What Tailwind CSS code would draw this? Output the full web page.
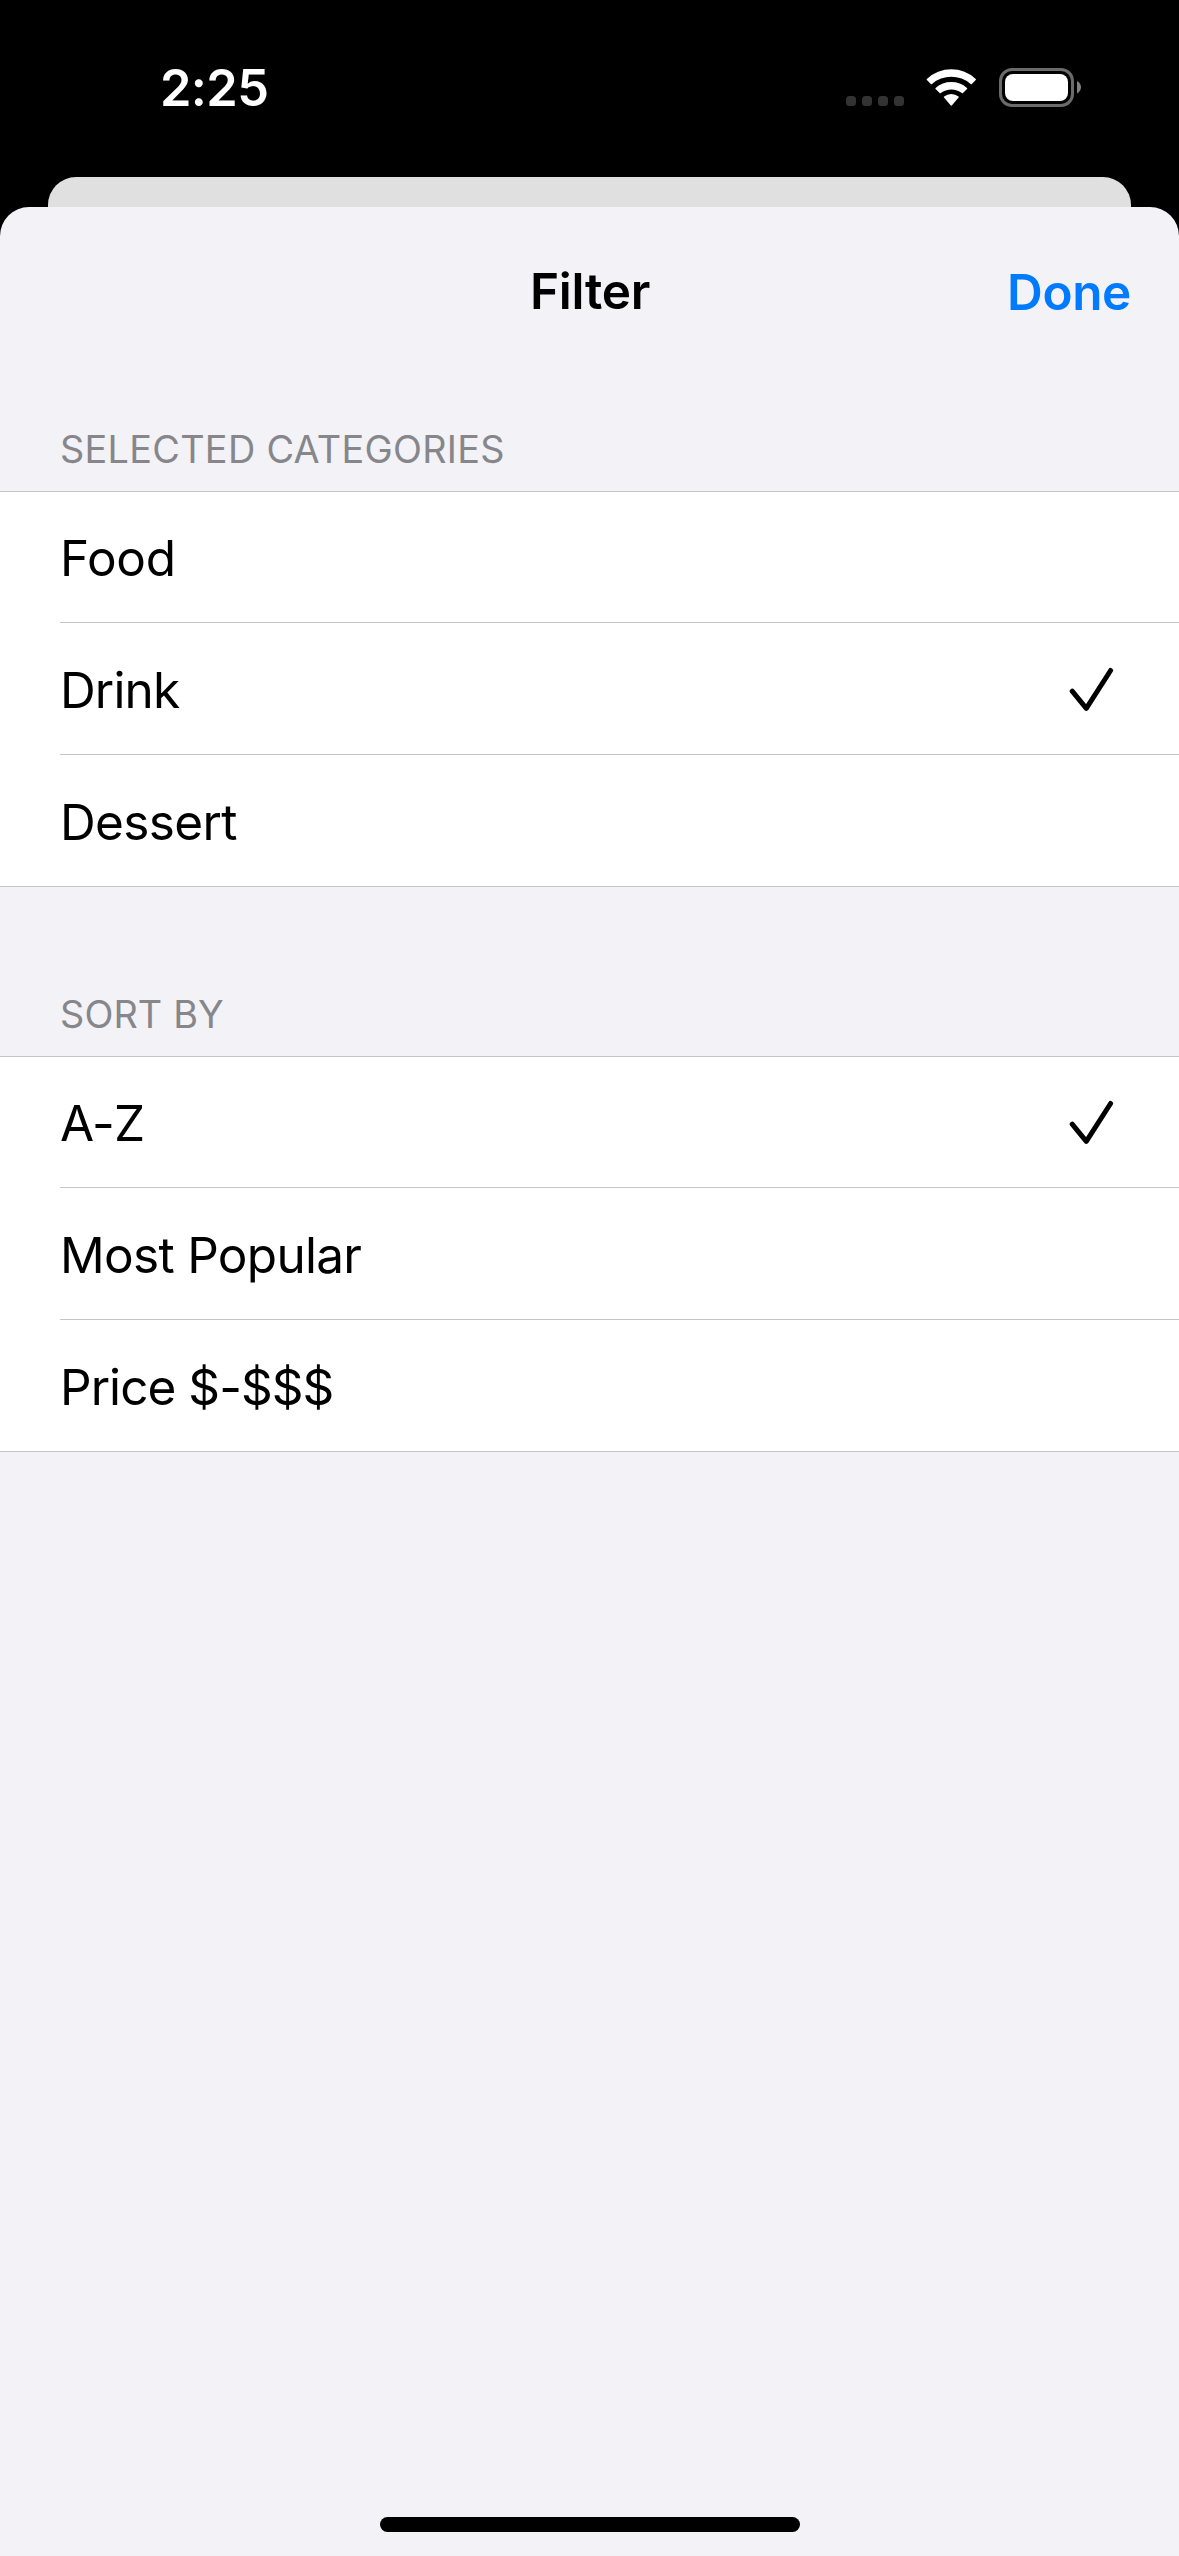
<!DOCTYPE html>
<html lang="en">
<head>
<meta charset="utf-8">
<title>Filter</title>
<script src="https://cdn.jsdelivr.net/npm/@tailwindcss/browser@4"></script>
</head>
<body class="bg-black">
<div class="flex h-[2556px] w-[1179px] flex-col overflow-hidden bg-black font-['Inter',sans-serif] text-black">
  <!-- Status bar -->
  <div class="flex h-[177px] shrink-0 items-start justify-between pl-[160px] pr-[98px] text-white">
    <div class="pt-[58px] text-[50.5px] leading-[60px] font-semibold tracking-[-0.6px]">2:25</div>
    <div class="flex pt-[68px]">
      <svg class="mr-[22px] h-[39px] w-[58px]" viewBox="0 0 58 39" fill="#333333">
        <rect x="0" y="28" width="10" height="10" rx="3.5"/>
        <rect x="16" y="28" width="10" height="10" rx="3.5"/>
        <rect x="32" y="28" width="10" height="10" rx="3.5"/>
        <rect x="48" y="28" width="10" height="10" rx="3.5"/>
      </svg>
      <svg class="mr-[21px] h-[39px] w-[52px]" viewBox="0 0 52 39" fill="white">
        <path d="M.9 12.1Q.3 11.5.9 10.9A36 36 0 0 1 49.7 10.9Q50.3 11.5 49.7 12.1L45.8 16Q45.3 16.5 44.6 15.9A29.5 29.5 0 0 0 6 15.9Q5.3 16.5 4.8 16Z"/>
        <path d="M9.6 21.1Q9 20.5 9.6 19.9A23.8 23.8 0 0 1 41 19.9Q41.6 20.5 41 21.1L37 25.1Q36.5 25.6 35.8 25.1A17 17 0 0 0 14.8 25.1Q14.1 25.6 13.6 25.1Z"/>
        <path d="M18 29.6Q17.4 29 18.1 28.5A11.5 11.5 0 0 1 32.5 28.5Q33.2 29 32.6 29.6L26 37.3Q25.3 38 24.6 37.3Z"/>
      </svg>
      <svg class="h-[39px] w-[82px]" viewBox="0 0 82 39">
        <rect x="1.5" y="1.5" width="72" height="36" rx="11.5" fill="none" stroke="#6b6b6b" stroke-width="3"/>
        <rect x="6" y="6" width="63" height="27" rx="8" fill="white"/>
        <path d="M78 13Q82 15.5 82 19.2T78 25.5Z" fill="#808080"/>
      </svg>
    </div>
  </div>
  <!-- Edge of the screen behind the sheet -->
  <div class="mx-[48px] -mb-[40px] h-[70px] shrink-0 rounded-t-[28px] bg-[#e0e0e0]"></div>
  <!-- Sheet -->
  <main class="flex flex-1 flex-col rounded-t-[29px] bg-[#f2f2f7]">
    <header class="grid h-[168px] shrink-0 grid-cols-3 pt-[54px] text-[49.5px] leading-[60px] font-semibold">
      <h1 class="col-start-2 pl-[1px] text-center tracking-[-0.26px]">Filter</h1>
      <button class="h-[61px] pt-[1px] pr-[48px] text-right tracking-[-0.39px] text-[#007aff]">Done</button>
    </header>
    <section>
      <h2 class="border-b border-[#c6c6c8] pt-[51px] pb-[19px] pl-[60px] text-[37.8px] leading-[46px] tracking-[0.3px] text-[#86868b]">SELECTED CATEGORIES</h2>
      <ul class="border-b border-[#c6c6c8] bg-white pl-[60px] text-[49.5px] leading-[128px]">
        <li class="border-b border-[#c6c6c8] pt-[2px] tracking-[-0.31px]">Food</li>
        <li class="flex items-start justify-between border-b border-[#c6c6c8] pt-[3px] pr-[65px] tracking-[-0.85px]">Drink
          <svg class="mt-[41px] h-[45px] w-[45px]" viewBox="0 0 45 45" fill="none" stroke="black" stroke-width="5" stroke-linecap="round" stroke-linejoin="round"><path d="M3.2 24.2L17.3 41.3L41.6 3.5"/></svg>
        </li>
        <li class="pt-[3px] tracking-[-0.65px]">Dessert</li>
      </ul>
    </section>
    <section>
      <h2 class="border-b border-[#c6c6c8] pt-[104px] pb-[19px] pl-[60px] text-[37.8px] leading-[46px] tracking-[0.13px] text-[#86868b]">SORT BY</h2>
      <ul class="border-b border-[#c6c6c8] bg-white pl-[60px] text-[49.5px] leading-[128px]">
        <li class="flex items-start justify-between border-b border-[#c6c6c8] pt-[2px] pr-[65px] tracking-[-0.6px]">A-Z
          <svg class="mt-[41px] h-[45px] w-[45px]" viewBox="0 0 45 45" fill="none" stroke="black" stroke-width="5" stroke-linecap="round" stroke-linejoin="round"><path d="M3.2 24.2L17.3 41.3L41.6 3.5"/></svg>
        </li>
        <li class="border-b border-[#c6c6c8] pt-[3px] tracking-[-0.7px]">Most Popular</li>
        <li class="pt-[3px] tracking-[-0.95px]">Price $-$$$</li>
      </ul>
    </section>
    <!-- Home indicator -->
    <div class="mx-auto mt-auto mb-[24px] h-[15px] w-[420px] rounded-full bg-black"></div>
  </main>
</div>
</body>
</html>
